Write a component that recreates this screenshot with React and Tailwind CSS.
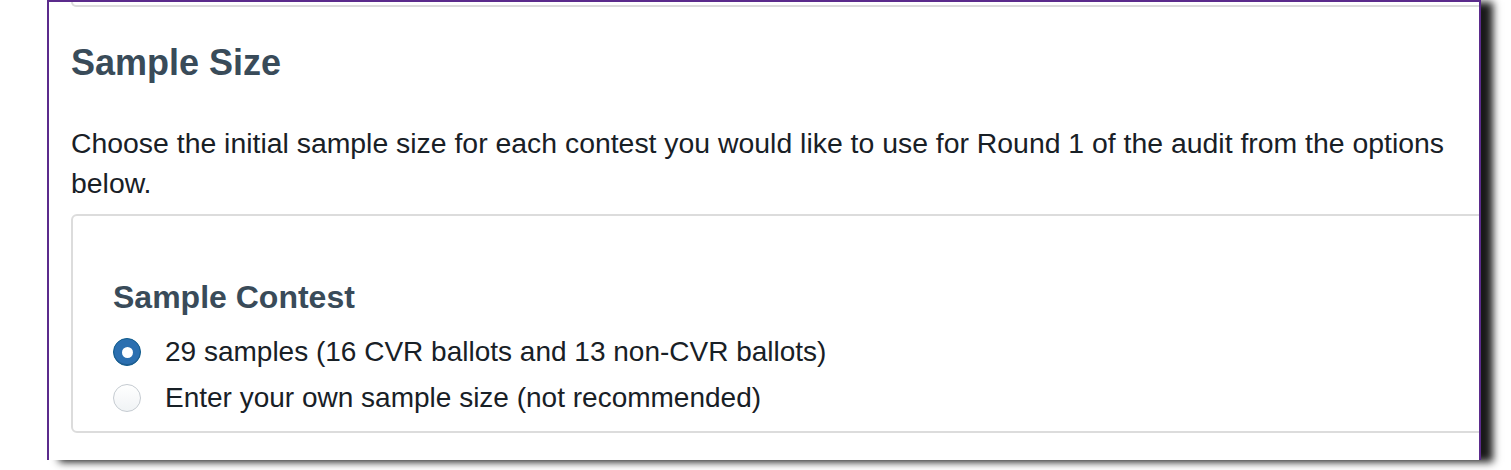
import React from 'react'

const Radio = ({ checked }) => {
  if (checked) {
    return (
      <span className="flex h-[28px] w-[28px] shrink-0 items-center justify-center rounded-full border border-[#0e5a8a] bg-[#2b6fb0] shadow-[inset_0_-1px_0_rgba(16,22,26,0.2)]">
        <span className="h-[11px] w-[11px] rounded-full bg-white" />
      </span>
    )
  }
  return (
    <span className="h-[28px] w-[28px] shrink-0 rounded-full border border-[#c5cbd1] bg-gradient-to-b from-white to-[#f0f3f5]" />
  )
}

const App = () => {
  return (
    <div className="h-[470px] w-[1511px] overflow-hidden bg-white font-['Liberation_Sans',Arial,sans-serif]">
      {/* ventana con borde morado */}
      <div className="ml-[47px] h-[460px] w-[1434px] overflow-hidden border-x-2 border-t-2 border-[#5b2b8c] bg-white pl-[22px] shadow-[12px_2px_8px_rgba(0,0,0,0.9)]">
        {/* final de la tarjeta anterior */}
        <div className="h-[5px] w-[1500px] rounded-b-[6px] border-x-2 border-b-2 border-[#dcdcdc]" />

        <h2 className="mt-[35px] text-[36px] font-bold leading-[42px] text-[#394b59]">Sample Size</h2>

        <p className="mt-[39px] w-[1395px] text-[28.4px] leading-[40px] text-[#182026]">
          Choose the initial sample size for each contest you would like to use for Round 1 of the audit from the options
          below.
        </p>

        {/* tarjeta */}
        <div className="mt-[11px] w-[1500px] rounded-[6px] border-2 border-[#dcdcdc] pb-[17px] pl-[40px] pt-[62px]">
          <h3 className="text-[32px] font-bold leading-[38px] text-[#394b59]">Sample Contest</h3>
          <div className="mt-[20px] flex flex-col gap-[14px]">
            <label className="flex h-[32px] items-center gap-[24px] text-[28px] leading-[32px] text-[#182026]">
              <Radio checked />
              29 samples (16 CVR ballots and 13 non-CVR ballots)
            </label>
            <label className="flex h-[32px] items-center gap-[24px] text-[28px] leading-[32px] text-[#182026]">
              <Radio />
              Enter your own sample size (not recommended)
            </label>
          </div>
        </div>
      </div>
    </div>
  )
}

export default App
